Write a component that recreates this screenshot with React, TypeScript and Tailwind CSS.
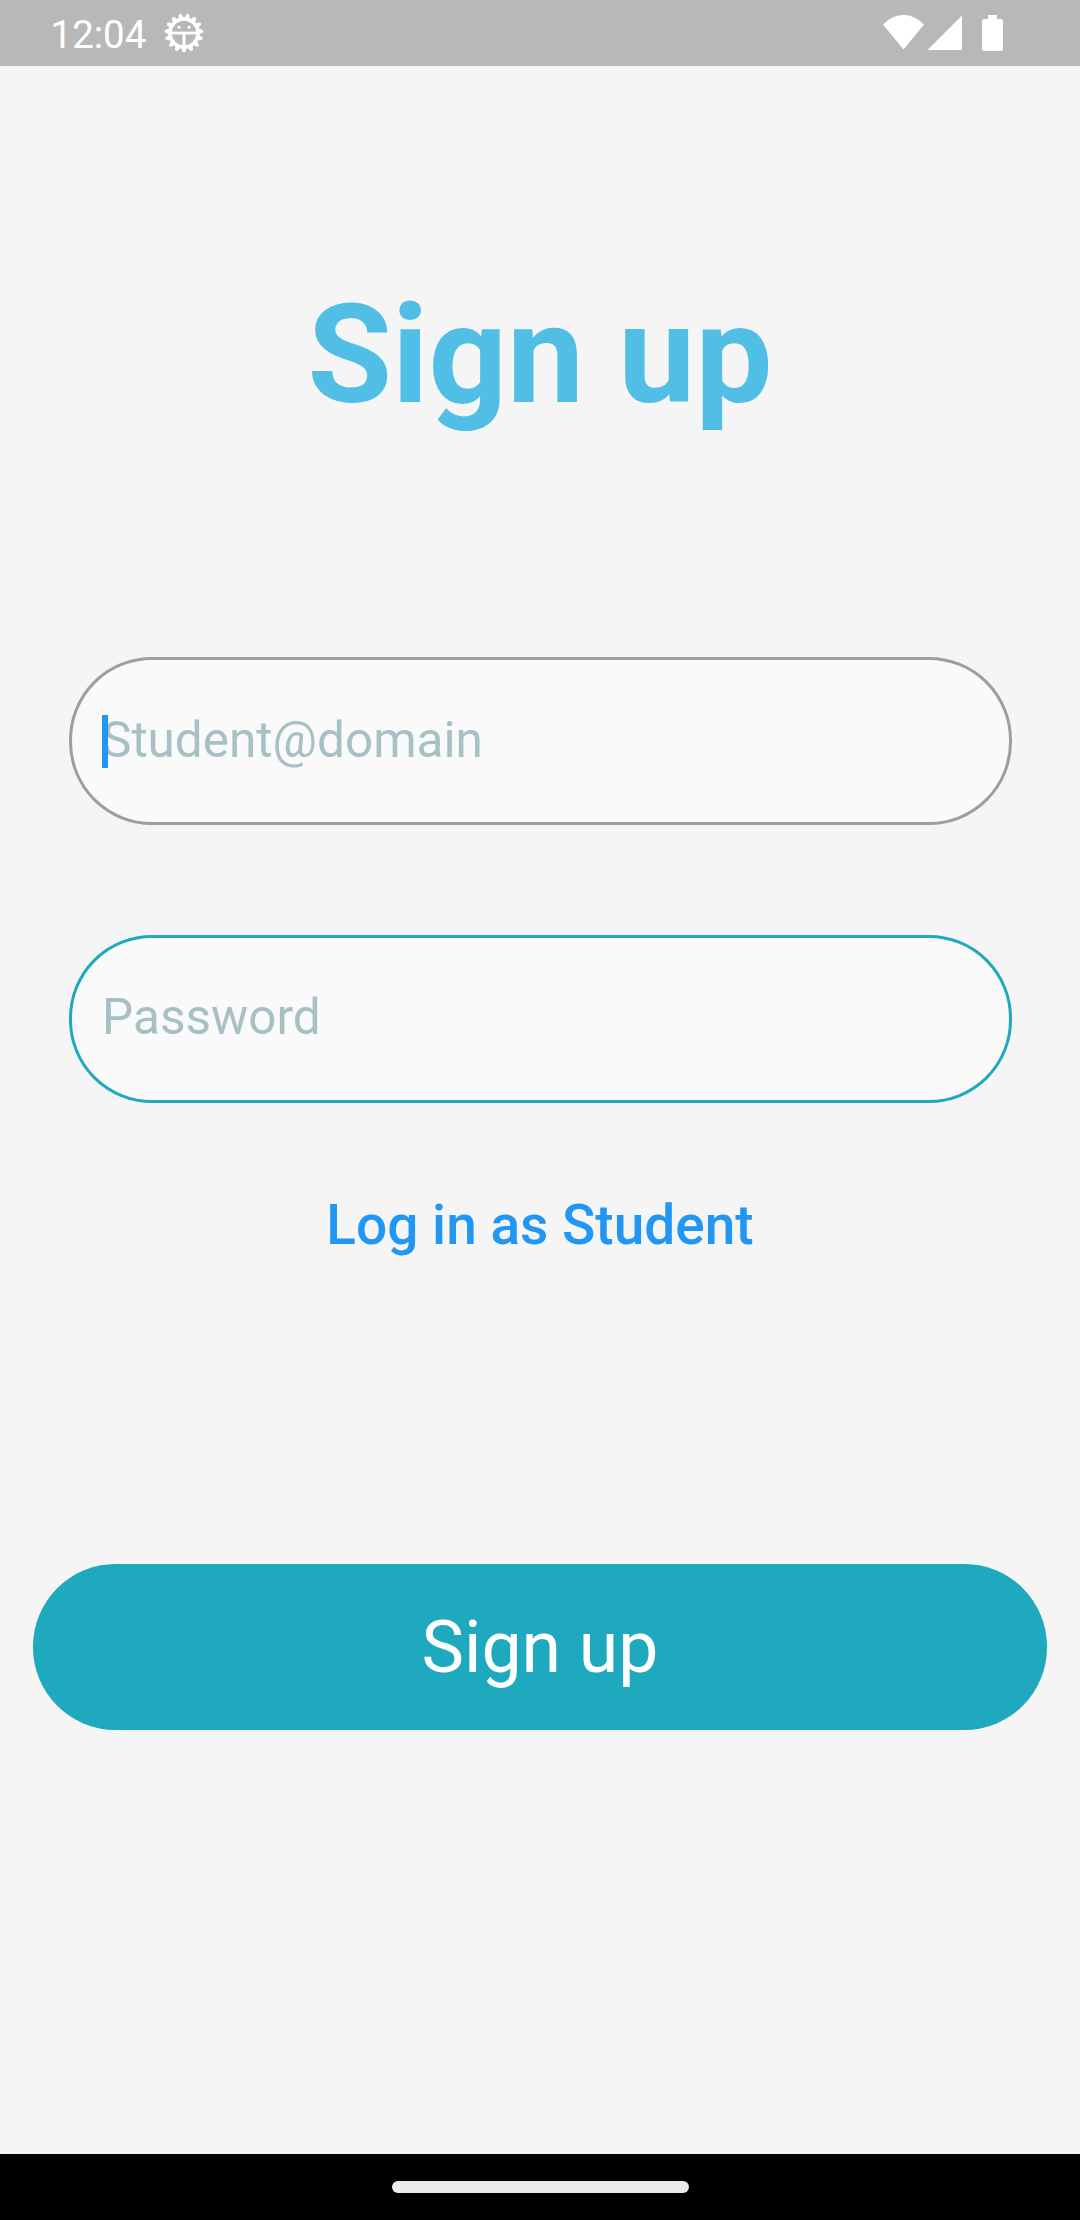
import React from "react";

const TEETH = Array.from({ length: 15 }, (_, i) => i * 24);

function GearFace() {
  return (
    <svg className="block h-[40px] w-[40px]" viewBox="-20 -20 40 40" fill="none" stroke="#ffffff">
      <circle r="14" strokeWidth="3.600" />
      {TEETH.map((a) => (
        <path key={a} d="M-2.700 -14.800 L-1.700 -18.300 Q0 -20.800 1.700 -18.300 L2.700 -14.800Z" fill="#ffffff" stroke="none" transform={`rotate(${a + 12})`} />
      ))}
      <path d="M-14 0H14" strokeWidth="2.800" />
      <path d="M0 0V14" strokeWidth="3.200" />
      <circle cx="-5" cy="-5.700" r="1.500" fill="#ffffff" stroke="none" />
      <circle cx="5" cy="-5.700" r="1.500" fill="#ffffff" stroke="none" />
    </svg>
  );
}

function StatusBar() {
  return (
    <header className="flex h-[66px] shrink-0 items-start bg-[#b8b8b8] text-white">
      <span className="ml-[50.500px] mt-[12px] w-[113px] text-[38.5px] leading-[46px] whitespace-nowrap">12:04</span>
      <div className="mt-[13px]">
        <GearFace />
      </div>
      <svg className="ml-auto mr-[76px] block h-[66px] w-[121px]" viewBox="0 0 121 66" fill="#ffffff">
        <path d="M0 24.5Q9 15 20.5 15T41 24.5L20.5 49.5Z" />
        <path d="M44.5 50L79 15.5V50Z" />
        <path d="M105 15h9v4h3.500q2.500 0 2.500 2.500v27q0 2.500-2.500 2.500h-16q-2.500 0-2.500-2.500v-27q0-2.500 2.500-2.500h3.500z" />
      </svg>
    </header>
  );
}

export default function App() {
  return (
    <div className="flex h-[2220px] w-[1080px] flex-col overflow-hidden bg-[#f5f5f5] font-['Roboto',sans-serif]">
      <StatusBar />
      <main className="flex flex-1 flex-col items-center">
        <h1 className="mt-[209px] text-[137.5px] leading-[160px] font-bold whitespace-nowrap text-[#51bee6]">Sign up</h1>
        <div className="mt-[222px] flex h-[168px] w-[943px] items-center rounded-[83px] border-[3px] border-[#9e9e9e] bg-[#fafafa] pb-[2px] pl-[30.500px]">
          <span className="relative z-10 mt-[2px] h-[53px] w-[6px] bg-[#2196f3]" />
          <span className="-ml-[6px] text-[49.5px] leading-[58px] text-[#a7c0c4]">Student@domain</span>
        </div>
        <div className="mt-[110px] flex h-[168px] w-[943px] items-center rounded-[83px] border-[3px] border-[#1fa9be] bg-[#fafafa] pb-[4px] pl-[30.500px]">
          <span className="text-[49.5px] leading-[58px] text-[#a7c0c4]">Password</span>
        </div>
        <a className="mt-[90px] text-[55px] leading-[64px] font-medium whitespace-nowrap text-[#2196f3]">Log in as Student</a>
        <button className="mt-[307.300px] flex h-[165.300px] w-[1014px] items-center justify-center rounded-[82.5px] bg-[#1fa9be] pt-[2px] text-[71.5px] leading-[84px] text-white">
          Sign up
        </button>
      </main>
      <footer className="flex h-[66px] shrink-0 justify-center bg-black">
        <div className="mt-[27px] h-[12px] w-[297px] rounded-full bg-[#ebebeb]" />
      </footer>
    </div>
  );
}
